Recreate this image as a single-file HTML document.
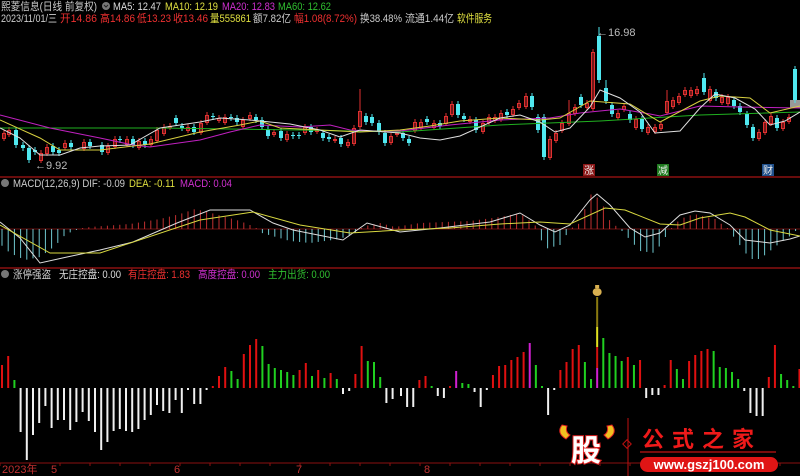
<!DOCTYPE html>
<html><head><meta charset="utf-8"><style>
html,body{margin:0;padding:0;background:#000;width:800px;height:476px;overflow:hidden}
svg{display:block}
text{font-family:"Liberation Sans","Noto Sans CJK SC",sans-serif;font-size:11px}
</style></head><body>
<svg id="s" width="800" height="476" viewBox="0 0 800 476">
<rect width="800" height="476" fill="#000"/>
<line x1="0" y1="177" x2="800" y2="177" stroke="#8a1010" stroke-width="1.5"/>
<line x1="0" y1="268" x2="800" y2="268" stroke="#8a1010" stroke-width="1.5"/>
<line x1="0" y1="463" x2="800" y2="463" stroke="#8a1010" stroke-width="1"/>
<line x1="0" y1="229" x2="800" y2="229" stroke="#6a1010" stroke-width="1"/>
<!-- header -->
<text x="1" y="10" fill="#ccc" textLength="96" lengthAdjust="spacingAndGlyphs">熙菱信息(日线 前复权)</text>
<circle cx="106" cy="6" r="4" fill="#777"/><path d="M104 5l2 2 2-2" stroke="#222" fill="none"/>
<text x="113" y="10" fill="#ddd" textLength="48" lengthAdjust="spacingAndGlyphs">MA5: 12.47</text>
<text x="165" y="10" fill="#e0e040" textLength="53" lengthAdjust="spacingAndGlyphs">MA10: 12.19</text>
<text x="222" y="10" fill="#d030d0" textLength="53" lengthAdjust="spacingAndGlyphs">MA20: 12.83</text>
<text x="278" y="10" fill="#30c030" textLength="53" lengthAdjust="spacingAndGlyphs">MA60: 12.62</text>
<text x="1" y="22" fill="#ccc" textLength="56" lengthAdjust="spacingAndGlyphs">2023/11/01/三</text>
<text x="60" y="22" fill="#ee3030" textLength="37" lengthAdjust="spacingAndGlyphs">开14.86</text>
<text x="100" y="22" fill="#ee3030" textLength="35" lengthAdjust="spacingAndGlyphs">高14.86</text>
<text x="137" y="22" fill="#ee3030" textLength="34" lengthAdjust="spacingAndGlyphs">低13.23</text>
<text x="173" y="22" fill="#ee3030" textLength="35" lengthAdjust="spacingAndGlyphs">收13.46</text>
<text x="210" y="22" fill="#e0e040" textLength="41" lengthAdjust="spacingAndGlyphs">量555861</text>
<text x="253" y="22" fill="#ccc" textLength="38" lengthAdjust="spacingAndGlyphs">额7.82亿</text>
<text x="294" y="22" fill="#ee3030" textLength="63" lengthAdjust="spacingAndGlyphs">幅1.08(8.72%)</text>
<text x="360" y="22" fill="#ccc" textLength="42" lengthAdjust="spacingAndGlyphs">换38.48%</text>
<text x="405" y="22" fill="#ccc" textLength="49" lengthAdjust="spacingAndGlyphs">流通1.44亿</text>
<text x="457" y="22" fill="#e0e040" textLength="35" lengthAdjust="spacingAndGlyphs">软件服务</text>
<!-- panel titles -->
<circle cx="5" cy="183" r="4" fill="#777"/>
<text x="13" y="187" fill="#ccc" textLength="112" lengthAdjust="spacingAndGlyphs">MACD(12,26,9) DIF: -0.09</text>
<text x="129" y="187" fill="#e0e040" textLength="46" lengthAdjust="spacingAndGlyphs">DEA: -0.11</text>
<text x="180" y="187" fill="#d030d0" textLength="52" lengthAdjust="spacingAndGlyphs">MACD: 0.04</text>
<circle cx="5" cy="274" r="4" fill="#777"/>
<text x="13" y="278" fill="#ccc" textLength="38" lengthAdjust="spacingAndGlyphs">涨停强盗</text>
<text x="59" y="278" fill="#ddd" textLength="62" lengthAdjust="spacingAndGlyphs">无庄控盘: 0.00</text>
<text x="128" y="278" fill="#ee3030" textLength="62" lengthAdjust="spacingAndGlyphs">有庄控盘: 1.83</text>
<text x="198" y="278" fill="#d030d0" textLength="62" lengthAdjust="spacingAndGlyphs">高度控盘: 0.00</text>
<text x="268" y="278" fill="#30c030" textLength="62" lengthAdjust="spacingAndGlyphs">主力出货: 0.00</text>
<!-- price labels -->
<text x="35" y="169" fill="#bbb">←9.92</text>
<text x="597" y="36" fill="#bbb">←16.98</text>
<rect x="790" y="100" width="10" height="8" fill="#999"/>
<rect x="583" y="164" width="12" height="12" fill="#8a1515"/><text x="584" y="174" fill="#eee" style="font-size:10px">涨</text>
<rect x="657" y="164" width="12" height="12" fill="#1f7a1f"/><text x="658" y="174" fill="#eee" style="font-size:10px">减</text>
<rect x="762" y="164" width="12" height="12" fill="#1f4f8a"/><text x="763" y="174" fill="#eee" style="font-size:10px">财</text>
<g id="g"></g>
<text x="2" y="473" fill="#c03030">2023年</text>
<text x="51" y="473" fill="#c03030">5</text>
<text x="174" y="473" fill="#c03030">6</text>
<text x="296" y="473" fill="#c03030">7</text>
<text x="424" y="473" fill="#c03030">8</text>
<!-- logo -->
<path d="M562 425q-6 8 4 14l4-4q-5-3-3-9z" fill="#f0c020" stroke="#e02020"/>
<path d="M612 425q6 8-4 14l-4-4q5-3 3-9z" fill="#f0c020" stroke="#e02020"/>
<text x="571" y="461" fill="#fff" stroke="#e02020" stroke-width="2" paint-order="stroke" style="font-size:30px;font-weight:bold">股</text>
<line x1="628" y1="418" x2="628" y2="476" stroke="#c01010"/>
<rect x="624" y="441" width="6" height="6" transform="rotate(45 627 444)" fill="none" stroke="#c01010"/>
<text x="642" y="447" fill="#ee1a1a" style="font-size:22px;font-weight:bold;letter-spacing:8px">公式之家</text>
<line x1="640" y1="452" x2="776" y2="452" stroke="#a01010" stroke-width="1.5"/>
<rect x="640" y="457" width="138" height="15" rx="7.5" fill="#e01515"/>
<text x="709" y="469" fill="#fff" text-anchor="middle" style="font-size:13px;font-weight:bold">www.gszj100.com</text>
</svg>
<script>
var g=document.getElementById('g'),h='';
function L(x1,y1,x2,y2,c,w){h+='<line x1="'+x1+'" y1="'+y1+'" x2="'+x2+'" y2="'+y2+'" stroke="'+c+'" stroke-width="'+(w||1)+'"/>';}
function R(x,y,w,hh,c,f){h+='<rect x="'+x+'" y="'+y+'" width="'+w+'" height="'+hh+'" '+(f?'fill="'+c+'"':'fill="none" stroke="'+c+'"')+'/>';}
function P(pts,c){h+='<polyline fill="none" stroke="'+c+'" stroke-width="1" points="'+pts+'"/>';}
for(var x=0;x<800;x+=30)L(x,463,x,466,'#8a1010');
var B=[[23,'r'],[32,'r'],[8,'g'],-44,-72,-47,-35,-18,-40,-32,-32,-42,-34,-24,-33,-44,-62,-54,-43,-41,-43,-44,-41,-32,-27,-17,-23,-25,-12,-25,-2,-16,-16,-2,[2,'r'],[12,'r'],[21,'r'],[17,'g'],[9,'g'],[34,'r'],[43,'r'],[49,'r'],[42,'g'],[24,'g'],[20,'g'],[18,'g'],[16,'g'],[13,'g'],[18,'r'],[25,'r'],[12,'g'],[18,'r'],[10,'g'],[15,'r'],[9,'g'],-6,-3,[14,'r'],[42,'r'],[27,'g'],[26,'g'],[11,'g'],-15,-11,-8,
-19,-19,[8,'r'],[12,'r'],[2,'g'],-8,-10,[2,'r'],[17,'m'],[5,'g'],[4,'g'],-4,-19,-2,[13,'r'],[22,'r'],[23,'r'],[28,'r'],[31,'r'],[36,'r'],[45,'m'],[23,'g'],[2,'g'],-27,-2,[18,'r'],[26,'r'],[39,'r'],[43,'r'],[26,'g'],[9,'g'],'S',[50,'g'],[35,'g'],[32,'g'],[27,'g'],[31,'r'],[23,'g'],[28,'r'],-10,-7,-7,[3,'r'],[28,'r'],[19,'g'],[9,'g'],[27,'r'],[33,'r'],[37,'r'],[39,'r'],[37,'g'],[21,'g'],[20,'g'],[16,'g'],[9,'g'],-3,-25,-28,-28,[11,'r'],[43,'r'],[14,'g'],[8,'g'],[2,'g'],[19,'r']];
var C={r:'#e01010',g:'#20d020',m:'#d020d0'};
for(var i=0;i<B.length;i++){
 var x=i<64?1+6.2*i:400+(i-64)*6.13;
 var b=B[i],y0=388;
 if(b==='S'){R(x,y0-20,2,20,'#d020d0',1);R(x,y0-41,2,21,'#d01010',1);R(x,y0-61,2,20,'#e0e020',1);R(x,y0-91,2,30,'#8a7a10',1);
  h+='<ellipse cx="'+(x+1)+'" cy="'+(y0-96)+'" rx="4.5" ry="4" fill="#d8b050"/><rect x="'+(x-1)+'" y="'+(y0-103)+'" width="4" height="3" fill="#d8b050"/>';continue;}
 if(typeof b==='number')R(x,y0,2,-b,'#f0f0f0',1);
 else R(x,y0-b[0],2,b[0],C[b[1]],1);
}
function mh(x){
 var pts=[[0,-15],[10,-24],[25,-31],[40,-28],[55,-17],[65,-6],[75,-1],[90,2],[130,5],[160,10],[180,15],[195,20],[215,15],[240,8],[255,2],[262,-4],[290,-12],[310,-14],[340,-10],[355,-4],[365,3],[380,6],[395,2],[420,6],[470,8],[500,12],[520,16],[535,4],[545,-20],[560,-16],[570,0],[580,6],[590,35],[600,30],[610,8],[622,-2],[640,-22],[655,-24],[668,-4],[680,10],[694,15],[715,10],[728,0],[750,-30],[760,-30],[780,-14],[793,-5],[800,3]];
 for(var k=0;k<pts.length-1;k++){if(x>=pts[k][0]&&x<=pts[k+1][0]){var t=(x-pts[k][0])/(pts[k+1][0]-pts[k][0]);return pts[k][1]+t*(pts[k+1][1]-pts[k][1]);}}return 0;}
for(var x=2;x<800;x+=6.2){var v=mh(x);if(Math.abs(v)<1)v=v<0?-1:1;if(v>0)L(x,229,x,229-v,'#c03030');else L(x,229,x,229-v,'#70c8d0');}
P('0,222 20,238 40,263 67,257 100,250 133,242 177,223 210,210 250,210 273,223 293,230 343,240 367,223 400,232 440,228 490,222 520,213 540,225 555,232 570,225 590,200 597,194 610,205 630,228 645,237 660,233 680,215 695,211 710,213 730,225 745,240 770,243 790,239 800,236','#ddd');
P('0,225 50,253 100,253 200,220 253,212 300,225 350,233 400,230 450,228 500,224 540,222 570,224 605,208 625,210 660,224 680,225 700,218 730,213 745,217 770,230 800,236','#d8d840');
var K=[[2,133,138,'r'],[7,130,134,'r'],[14,130,145,'c'],[21,145,148,'c'],[27,148,160,'c'],[33,150,152,'c'],[39,153,160,'r'],[45,147,153,'r'],[51,146,152,'c'],[57,150,153,'c'],[63,143,147,'r'],[69,143,147,'c'],[82,142,148,'r'],[88,142,146,'c'],[100,145,152,'c'],[106,146,152,'r'],[113,139,146,'r'],[118,139,140,'c'],[125,139,144,'r'],[131,139,145,'c'],[137,141,147,'r'],[143,141,145,'c'],[149,139,144,'r'],[155,130,140,'r'],[162,127,133,'r'],[168,126,127,'r'],[174,118,123,'c'],[180,126,128,'c'],[186,127,130,'r'],[192,127,132,'c'],[199,123,132,'r'],[205,115,122,'r'],[211,116,117,'c'],[217,118,120,'r'],[223,117,122,'r'],[229,117,118,'c'],[235,118,122,'c'],[241,120,126,'r'],[248,115,118,'r'],[254,117,120,'c'],[260,120,127,'c'],[266,129,136,'c'],[272,132,134,'r'],[279,131,138,'c'],[285,134,139,'r'],[291,135,136,'c'],[297,135,136,'c'],[303,127,132,'r'],[309,127,132,'c'],[315,130,131,'r'],[321,133,138,'c'],[327,137,139,'c'],[333,139,140,'r'],[339,138,144,'c'],[346,142,145,'r'],[352,128,143,'r'],[358,111,126,'r',89],[364,116,122,'c'],[370,117,123,'c'],[377,123,132,'c'],[383,133,143,'c'],[389,136,142,'r'],[395,133,134,'r'],
[401,133,138,'c'],[407,139,143,'c'],[413,122,130,'r'],[419,122,127,'r'],[425,119,122,'c'],[432,123,127,'r'],[438,123,126,'c'],[444,116,123,'r'],[450,104,114,'r'],[456,104,115,'c'],[462,116,119,'c'],[468,119,121,'r'],[474,120,130,'c'],[481,123,131,'r'],[487,117,122,'r'],[493,117,120,'r'],[499,113,119,'r'],[505,112,115,'c'],[511,109,114,'r'],[517,103,107,'r'],[524,96,106,'r'],[530,96,107,'c'],[536,117,130,'c'],[542,117,157,'c'],[548,139,157,'r'],[554,133,140,'r'],[560,123,130,'r'],[567,113,123,'r',100],[573,107,113,'r'],[579,97,105,'c'],[585,103,107,'r'],[591,52,108,'r'],[597,36,80,'c',27],[604,88,101,'c',80],[610,105,114,'c'],[616,113,117,'r'],[622,106,109,'r'],[628,114,120,'c'],[634,119,127,'r'],[640,119,129,'c'],[646,127,132,'r'],[653,127,131,'r'],[659,124,128,'r'],[665,101,112,'r',90],[671,100,106,'r'],[677,96,102,'r'],[683,90,94,'r'],[689,90,95,'r'],[695,89,93,'r'],[702,78,92,'c',73],[708,89,100,'r'],[714,92,98,'c'],[720,97,102,'r'],[726,97,103,'r'],[732,100,106,'c'],[738,106,112,'c'],[745,114,125,'c'],[751,127,138,'c'],[757,132,138,'r'],[763,122,132,'r'],[769,116,123,'r'],[775,118,128,'c'],[781,122,128,'r'],[787,117,121,'r'],[793,69,100,'c']];
for(var i=0;i<K.length;i++){var k=K[i],col=k[3]=='r'?'#e03030':'#50e8f0';
 var wt=k[4]||k[1]-3,wb=k[2]+3;L(k[0]+2,wt,k[0]+2,wb,col);
 if(k[3]=='r')R(k[0]+0.5,k[1]+0.5,3,Math.max(k[2]-k[1],1),col,0);else R(k[0],k[1],4,Math.max(k[2]-k[1],1),col,1);}
P('0,128 160,128 300,130 400,132 500,125 600,121 700,115 800,112','#20b020');
P('0,115 50,128 100,138 133,145 150,147 200,140 230,132 260,125 300,127 330,125 350,130 370,131 400,131 450,125 500,120 550,118 580,113 620,109 650,114 660,116 700,106 740,107 800,108','#c020c0');
P('0,120 40,138 60,150 100,150 150,144 200,132 240,125 260,121 280,128 320,130 360,132 400,130 430,126 460,121 500,118 540,120 560,118 590,101 630,104 660,122 700,101 720,96 750,98 770,113 800,106','#d8d040');
P('0,128 20,138 40,155 60,155 80,148 100,146 130,145 160,128 200,122 220,118 250,120 290,124 320,130 340,137 360,130 400,133 420,138 440,140 460,136 500,118 520,115 540,122 555,132 570,128 590,107 600,90 620,98 640,112 655,133 680,131 700,108 715,94 735,98 755,109 770,125 785,121 800,112','#e0e0e0');
g.innerHTML=h;
</script>
</body></html>
